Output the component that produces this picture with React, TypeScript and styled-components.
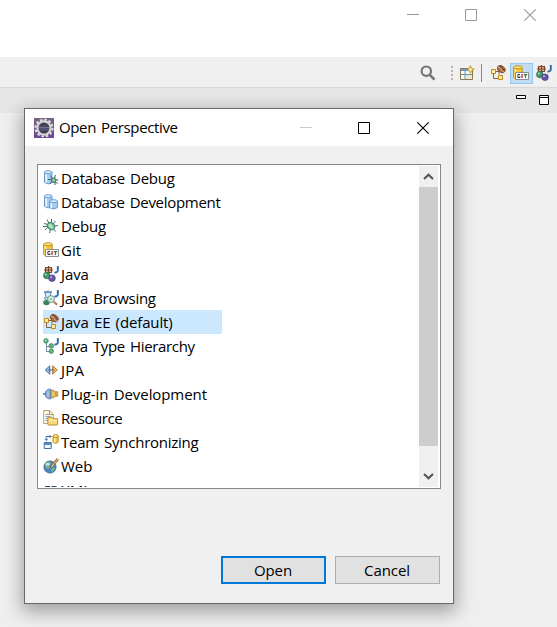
import React from 'react';
import styled, { createGlobalStyle } from 'styled-components';

const GlobalStyle = createGlobalStyle`
  * { box-sizing: border-box; }
  html, body { margin: 0; padding: 0; overflow: hidden; }
  body { font-family: "Open Sans", "Noto Sans", sans-serif; color: #000; }
  svg { display: block; flex: none; }
`;

const Workbench = styled.div`
  position: relative;
  width: 557px;
  height: 627px;
  overflow: hidden;
  background: #efefef;
`;

const WindowBar = styled.header`
  height: 57px;
  padding: 9px 21px 0 0;
  display: flex;
  justify-content: flex-end;
  align-items: flex-start;
  background: #fff;
`;

const Toolbar = styled.div`
  height: 30px;
  padding: 5px 5px 3px 0;
  display: flex;
  align-items: center;
  justify-content: flex-end;
  background: #f0f0f0;
`;

const Grip = styled.div`
  width: 2px;
  height: 14px;
  margin: 0 6px 0 16px;
  background: repeating-linear-gradient(#b8b2a8 0 2px, transparent 2px 4px);
`;

const Separator = styled.div`
  width: 1px;
  height: 18px;
  margin: 0 8px 0 6px;
  background: #888;
`;

const ActivePerspective = styled.div`
  width: 23px;
  height: 21px;
  margin: 0 3px 0 4px;
  padding: 1px 0 0 2px;
  background: #c2ddf2;
  border: 1px solid #90c8f6;
`;

const ViewStrip = styled.div`
  height: 26px;
  padding: 7px 8px 0 0;
  display: flex;
  justify-content: flex-end;
  gap: 13px;
  border-top: 1px solid #d8d8d8;
  background: #e6e6e6;
`;

const Dialog = styled.section`
  position: absolute;
  left: 24px;
  top: 108px;
  width: 430px;
  height: 496px;
  display: flex;
  flex-direction: column;
  background: #f0f0f0;
  border: 1px solid #696969;
  box-shadow: 0 6px 17px 2px rgba(0, 0, 0, 0.33);
`;

const TitleBar = styled.div`
  height: 37px;
  padding: 0 24px 0 9px;
  display: flex;
  align-items: center;
  background: #fff;
`;

const Title = styled.h1`
  flex: 1;
  margin: -1px 0 0 5px;
  font-size: 15px;
  line-height: 20px;
  font-weight: 400;
  letter-spacing: -0.36px;
  word-spacing: 1.5px;
  white-space: nowrap;
`;

const CaptionIcon = styled.svg`
  margin-left: 46px;
  &:last-child { margin-left: 47px; }
`;

const CaptionIcons = styled.div`
  display: flex;
`;

const ListBox = styled.div`
  width: 404px;
  height: 325px;
  margin: 18px 0 0 12px;
  padding: 1px 2px 1px 5px;
  display: flex;
  justify-content: space-between;
  background: #fff;
  border: 1px solid #828790;
`;

const Rows = styled.ul`
  width: 179px;
  height: 321px;
  margin: 0;
  padding: 0;
  list-style: none;
  overflow: hidden;
`;

const Row = styled.li<{ $selected?: boolean }>`
  height: 24px;
  display: flex;
  align-items: center;
  background: ${(p) => (p.$selected ? '#cce8ff' : 'transparent')};
`;

const Label = styled.span<{ $tracking: number }>`
  margin-left: 2px;
  font-size: 15px;
  line-height: 24px;
  letter-spacing: ${(p) => p.$tracking}px;
  word-spacing: 1.5px;
  white-space: nowrap;
`;

const ScrollTrack = styled.div`
  width: 19px;
  height: 321px;
  display: flex;
  flex-direction: column;
  align-items: stretch;
  background: #f0f0f0;
`;

const ScrollButton = styled.div`
  height: 21px;
  display: grid;
  place-items: center;
`;

const ScrollThumb = styled.div`
  height: 259px;
  margin-bottom: 20px;
  background: #cdcdcd;
`;

const Buttons = styled.footer`
  display: flex;
  justify-content: flex-end;
  gap: 9px;
  margin-top: 67px;
  padding-right: 13px;
`;

const Button = styled.button<{ $primary?: boolean }>`
  width: 105px;
  height: 28px;
  padding: 0 1px 0 0;
  font: 15px/20px "Open Sans", "Noto Sans", sans-serif;
  letter-spacing: -0.1px;
  color: #000;
  background: #e1e1e1;
  border: ${(p) => (p.$primary ? '2px solid #0078d7' : '1px solid #adadad')};
  border-radius: 0;
`;

const Icon = ({ children, size = 16 }: { children: React.ReactNode; size?: number }) => (
  <svg width={size} height={size} viewBox="0 0 16 16">{children}</svg>
);

const Caption = ({ kind, color }: { kind: 'min' | 'max' | 'close'; color: string }) => (
  <CaptionIcon width="12" height="12" viewBox="0 0 12 12" fill="none" stroke={color}>
    {kind === 'min' && <path d="M0 5.5h12" />}
    {kind === 'max' && <path d="M.5 .5h11v11H.5z" />}
    {kind === 'close' && <path d="M.3 .3l11.4 11.4M11.7 .3L.3 11.7" strokeWidth="1.1" />}
  </CaptionIcon>
);

const Cylinder = ({ x, y, w, h, gold }: { x: number; y: number; w: number; h: number; gold?: boolean }) => {
  const stroke = gold ? '#b8860b' : '#5b92cc';
  const side = gold ? '#f4c83c' : '#a9cdf1';
  return (
    <g stroke={stroke} strokeWidth=".9">
      <path d={`M${x} ${y + 1.5}v${h - 3}q${w / 2} 3 ${w} 0v${-(h - 3)}`} fill={side} />
      <path d={`M${x + 1.7} ${y + 3}v${h - 4}`} stroke={gold ? '#fff0a0' : '#e8f4ff'} strokeWidth="1.6" />
      <ellipse cx={x + w / 2} cy={y + 1.7} rx={w / 2} ry="1.5" fill={gold ? '#ffe88a' : '#d9ecfd'} />
    </g>
  );
};

const Bug = () => (
  <g stroke="#3d7c6b" fill="none" strokeWidth="1">
    <path d="M4 1.5l2 4M8.5 1v4M12.5 3L10 6M1 5.5l4 1M15 7.5l-4 .5M2 12l3-3M6.5 15l1-4M12.5 13.5L10 10M0 8.5h4" />
    <ellipse cx="8" cy="8.2" rx="3.9" ry="3.2" transform="rotate(40 8 8.2)" fill="#8bc9a6" />
    <path d="M6 6.5l3.5 3.5" stroke="#d5f3d5" strokeWidth="1.3" />
  </g>
);

const SmallBug = () => (
  <g fill="none" stroke="#356b5c">
    <path d="M7.5 5.5l1.5 3M12.5 5l-1 3.5M5 9.5h4M15.5 10h-3M7 14l2.5-3M12 15v-3.5M14.8 13.5l-3-2" />
    <ellipse cx="10.6" cy="10.2" rx="2.4" ry="2.2" fill="#8bc9a6" />
  </g>
);

const JavaJ = () => <path d="M14.8 0v4.2q0 2.6-3.4 2.3" fill="none" stroke="#2e6ba6" strokeWidth="1.9" />;

const Bean = () => (
  <g>
    <ellipse cx="11.3" cy="4.1" rx="4.3" ry="3.2" transform="rotate(35 11.3 4.1)" fill="#a96b43" stroke="#72401f" strokeWidth=".7" />
    <path d="M8 2.2q3 .2 3.3 2.3T14.5 7" fill="none" stroke="#f1c49c" strokeWidth=".8" />
    <path d="M9.5 1.3q3 .5 3.5 2.5t2 2.2" fill="none" stroke="#5b2e16" strokeWidth=".7" />
  </g>
);

const icons: Record<string, React.ReactNode> = {
  dbDebug: <><Cylinder x={1.5} y={0.5} w={7.5} h={13.5} /><SmallBug /></>,
  dbDev: <><Cylinder x={1.5} y={0.5} w={7.5} h={13.5} /><Cylinder x={6.5} y={5.5} w={8} h={9.5} /></>,
  debug: <Bug />,
  git: (
    <>
      <Cylinder x={0.7} y={0.6} w={8.5} h={13.5} gold />
      <path d="M2.5 7.5h13v7h-13z" fill="#fff" stroke="#8c8c94" />
      <path d="M7 9.5H4.9v3h2v-1.3" fill="none" stroke="#333" />
      <path d="M9 9v4" stroke="#d1203a" strokeWidth="1.3" />
      <path d="M10.7 9.6h3.6M12.5 9.5V13" stroke="#25803c" strokeWidth="1.2" />
    </>
  ),
  java: (
    <>
      <path d="M2.5 1.5h6v5h-6zM5.5 0v7.5M1 4h9" fill="#e8bd9c" stroke="#784527" strokeWidth="1.2" />
      <JavaJ />
      <circle cx="3.8" cy="9.5" r="3.3" fill="#43966b" stroke="#276d50" strokeWidth=".7" />
      <circle cx="2.8" cy="8.4" r="1" fill="#b1e4bd" />
      <circle cx="9" cy="12.2" r="3.3" fill="#6755a3" stroke="#493b83" strokeWidth=".7" />
      <circle cx="8" cy="11.2" r="1" fill="#c3b9e6" />
    </>
  ),
  browsing: (
    <>
      <path d="M2 2.5h6l-1 5H3z" fill="#d8eaff" stroke="#5088c8" />
      <path d="M1 2h8" stroke="#5088c8" strokeWidth="1.4" />
      <path d="M3.5 .8h3" stroke="#e5a09a" />
      <JavaJ />
      <ellipse cx="3.5" cy="12.5" rx="3.3" ry="2.8" fill="#348565" />
      <path d="M1 7.5l2 2-2 2" fill="none" stroke="#77a497" strokeWidth="1.2" />
      <circle cx="8" cy="9" r="3.4" fill="#e2f5e7" stroke="#719291" />
      <circle cx="8" cy="9" r="1.5" fill="#9bcda5" />
      <path d="M10.7 11.7l3.5 3" stroke="#ad8054" strokeWidth="2" />
    </>
  ),
  javaee: (
    <>
      <path d="M3.5 9v4.5H8M6 6.5h3v3" fill="none" stroke="#876335" />
      <path d="M1.5 4.5h4v4h-4zM8.5 10.5h4v4h-4z" fill="#fff1ad" stroke="#c28b18" />
      <Bean />
    </>
  ),
  hierarchy: (
    <>
      <path d="M3.5 4v9.5H8M3.5 8.5H8" fill="none" stroke="#718da4" />
      <g fill="#62b484" stroke="#347c59" strokeWidth=".7">
        <circle cx="3" cy="2.9" r="2.3" /><circle cx="8.3" cy="7.9" r="2.3" /><circle cx="8.3" cy="13.2" r="2.2" />
      </g>
      <circle cx="2.6" cy="2.2" r=".8" fill="#c7efcf" />
      <JavaJ />
    </>
  ),
  jpa: (
    <>
      <path d="M9.7 3.8v8.4L14.3 8z" fill="#f3bd63" stroke="#9c6a2c" strokeWidth=".9" />
      <path d="M6.8 3.8v8.4L2.2 8z" fill="#8dbce5" stroke="#386994" strokeWidth=".9" />
      <path d="M5.5 8h6" stroke="#575c65" />
    </>
  ),
  plugin: (
    <>
      <path d="M0 8h3" stroke="#6d91c8" strokeWidth="2" />
      <path d="M2.5 5.5l2.8-2.3h2.5v9.6H5.3l-2.8-2.3z" fill="#82a9dc" stroke="#4d76ae" strokeWidth=".8" />
      <path d="M8.2 4.2h2.6v1.6h4v1.5h-2.5v1.4h2.5v1.5h-4v1.6H8.2z" fill="#f4cf65" stroke="#aa7a20" strokeWidth=".9" />
      <path d="M5 5.3v5.4" stroke="#c6def8" />
    </>
  ),
  resource: (
    <>
      <path d="M.7 .5h6l3.6 3.6v9.4H.7z" fill="#fff8de" stroke="#b4a379" />
      <path d="M2.5 4.5H6M2.5 6.5h5M2.5 8.5H5M2.5 10.5H5" stroke="#83a9ce" />
      <path d="M6.5 .7v3.8H10" fill="none" stroke="#a99868" />
      <path d="M4.8 14V7.3h4l1 1.4h4.9V14q0 1-1 1H6q-1.2 0-1.2-1z" fill="#fcd978" stroke="#b98122" strokeWidth=".9" />
      <path d="M5.8 10.4h8.2" stroke="#fff0ba" />
    </>
  ),
  team: (
    <>
      <Cylinder x={10} y={0.4} w={5.2} h={9} gold />
      <path d="M3.2 6.2V2.5H8M6.5 1L8 2.5 6.5 4M1.7 5l1.5 1.5L4.8 5" fill="none" stroke="#466b9b" />
      <path d="M1.2 8.5h7v6h-7z" fill="#e9f6ff" stroke="#456f9f" />
      <path d="M1 10h7.5" stroke="#5c8ac2" strokeWidth="2" />
    </>
  ),
  web: (
    <>
      <circle cx="7" cy="9" r="6.1" fill="#4a86c3" stroke="#32628c" strokeWidth=".8" />
      <path d="M2 5.5l4-2 2 2-2 2 2 2-3 1.5L2.5 9zM9 10l3-.5-2 4H8z" fill="#80b881" />
      <ellipse cx="4.7" cy="6.3" rx="2.2" ry="1.3" fill="#c6e2f2" />
      <path d="M15 1l-5 5.5" stroke="#956c3c" strokeWidth="2.7" />
      <path d="M15 1l-4.5 5" stroke="#f5d49c" />
      <path d="M10.5 5.7l1 1Q10 10 6.5 9.5 8.5 8.8 8.5 7z" fill="#ead8b9" stroke="#75543b" strokeWidth=".7" />
    </>
  ),
  xml: <path d="M2 4.8h5M4.5 5v7M8.5 4.8h5M11 5v7" stroke="#344f6d" strokeWidth="1.7" />,
  open: (
    <>
      <path d="M1.5 3.5h12v11h-12z" fill="#f5fbfa" stroke="#8b7954" />
      <path d="M2 5h11" stroke="#6699d4" strokeWidth="2" />
      <path d="M2 9.5h11M6 6v8" stroke="#6b93a1" />
      <path d="M7 10h6v4H7z" fill="#e5ead5" />
      <path d="M11.5 .8l1.2 2.5 2.5 1.2-2.5 1.2-1.2 2.5-1.2-2.5-2.5-1.2 2.5-1.2z" fill="#fff1a1" stroke="#b88722" strokeWidth=".9" />
    </>
  ),
};

const perspectives: [string, string, number][] = [
  ['dbDebug', 'Database Debug', -0.26],
  ['dbDev', 'Database Development', -0.3],
  ['debug', 'Debug', -0.2],
  ['git', 'Git', 0],
  ['java', 'Java', -0.1],
  ['browsing', 'Java Browsing', -0.28],
  ['javaee', 'Java EE (default)', -0.13],
  ['hierarchy', 'Java Type Hierarchy', -0.34],
  ['jpa', 'JPA', 0.2],
  ['plugin', 'Plug-in Development', -0.08],
  ['resource', 'Resource', -0.45],
  ['team', 'Team Synchronizing', -0.25],
  ['web', 'Web', 0],
  ['xml', 'XML', 0],
];

const EclipseLogo = () => (
  <svg width="20" height="20" viewBox="0 0 20 20">
    <defs>
      <linearGradient id="violet" x2="0" y2="1"><stop stopColor="#766681" /><stop offset="1" stopColor="#6b489b" /></linearGradient>
      <linearGradient id="lens" x2="0" y2="1"><stop stopColor="#34313d" /><stop offset=".6" stopColor="#56547c" /><stop offset="1" stopColor="#272632" /></linearGradient>
    </defs>
    <path d="M0 0h20v20H0z" fill="url(#violet)" />
    <circle cx="10" cy="10" r="8.5" fill="none" stroke="#e4dede" strokeWidth="2" strokeDasharray="2.6 1.85" />
    <circle cx="10" cy="10" r="6.6" fill="url(#lens)" stroke="#d8d4d3" strokeWidth="2.2" />
    <path d="M5 9.5h10" stroke="#777292" />
  </svg>
);

const Chevron = ({ down }: { down?: boolean }) => (
  <svg width="11" height="9" viewBox="0 0 11 9">
    <path d={down ? 'M1 2l4.5 4.3L10 2' : 'M1 7l4.5-4.3L10 7'} fill="none" stroke="#555" strokeWidth="2.1" />
  </svg>
);

export default function App() {
  return (
    <>
      <GlobalStyle />
      <Workbench>
        <WindowBar>
          <Caption kind="min" color="#999" /><Caption kind="max" color="#999" /><Caption kind="close" color="#999" />
        </WindowBar>
        <Toolbar>
          <svg width="16" height="16" viewBox="0 0 16 16" fill="none" stroke="#747474">
            <circle cx="7.3" cy="6.2" r="4.7" strokeWidth="2.2" /><path d="M10.5 9.7l5 5" strokeWidth="2.6" />
          </svg>
          <Grip />
          <Icon>{icons.open}</Icon>
          <Separator />
          <Icon>{icons.javaee}</Icon>
          <ActivePerspective><Icon>{icons.git}</Icon></ActivePerspective>
          <Icon>{icons.java}</Icon>
        </Toolbar>
        <ViewStrip>
          <svg width="10" height="10" viewBox="0 0 10 10"><path d="M.5 .5h9v3h-9z" fill="#fff" stroke="#000" /></svg>
          <svg width="10" height="10" viewBox="0 0 10 10"><path d="M.5 .5h9v9h-9zM0 2.5h10" fill="#fff" stroke="#000" /></svg>
        </ViewStrip>
        <Dialog>
          <TitleBar>
            <EclipseLogo />
            <Title>Open Perspective</Title>
            <CaptionIcons>
              <Caption kind="min" color="#ccc" /><Caption kind="max" color="#000" /><Caption kind="close" color="#000" />
            </CaptionIcons>
          </TitleBar>
          <ListBox>
            <Rows>
              {perspectives.map(([icon, name, tracking]) => (
                <Row key={name} $selected={icon === 'javaee'}>
                  <Icon>{icons[icon]}</Icon>
                  <Label $tracking={tracking}>{name}</Label>
                </Row>
              ))}
            </Rows>
            <ScrollTrack>
              <ScrollButton><Chevron /></ScrollButton>
              <ScrollThumb />
              <ScrollButton><Chevron down /></ScrollButton>
            </ScrollTrack>
          </ListBox>
          <Buttons>
            <Button $primary>Open</Button>
            <Button>Cancel</Button>
          </Buttons>
        </Dialog>
      </Workbench>
    </>
  );
}
